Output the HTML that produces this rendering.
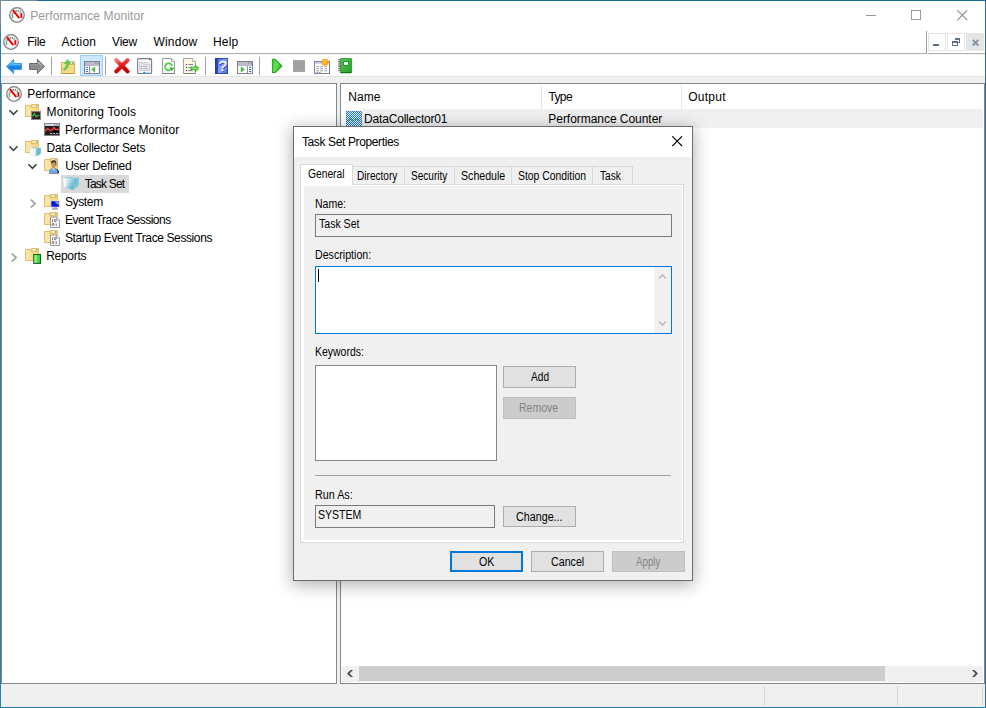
<!DOCTYPE html>
<html lang="en"><head><meta charset="utf-8"><title>Performance Monitor</title>
<style>
html,body{margin:0;padding:0}
body{width:986px;height:708px;overflow:hidden;background:#fff;position:relative;font-family:"Liberation Sans",sans-serif}
#win{position:absolute;left:0;top:0;width:986px;height:708px;overflow:hidden;background:#fff}
.b,.i,.t{position:absolute}
.i{width:16px;height:16px;line-height:0}
svg{display:block}
.t{white-space:pre;line-height:20px;height:20px;color:#000}
.f12{font-size:12px}
.f11{font-size:11px}
.sx{transform-origin:0 0}
#dlg{position:absolute;left:293px;top:126px;width:398px;height:453px;border:1px solid #6b6b6b;background:#f0f0f0;box-shadow:0 3px 16px 1px rgba(0,0,0,.31)}
.btn{position:absolute;box-sizing:border-box;border:1px solid #adadad;background:#e1e1e1}
.btn.dis{border-color:#bfbfbf;background:#ccc}
.btn.def{border:2px solid #0078d7}
</style></head><body><div id="win">

<div class="b" style="left:0px;top:0px;width:986px;height:1px;background:linear-gradient(to right,#6d8ea3 0,#6d8ea3 36px,#166a9d 38px);z-index:50"></div>
<div class="b" style="left:0px;top:0px;width:1px;height:708px;background:linear-gradient(to bottom,#7a8d9b 0,#7a8d9b 20px,#2680aa 40px,#2680aa 600px,#1f86ac 700px);z-index:50"></div>
<div class="b" style="left:985px;top:0px;width:1px;height:708px;background:#2070a8;z-index:50"></div>
<div class="b" style="left:0px;top:707px;width:986px;height:1px;background:#1a7aa2;z-index:50"></div>
<div class="i" style="left:9px;top:7px"><svg width="16" height="16" viewBox="0 0 16 16">
<circle cx="8" cy="8" r="7.2" fill="#fdfcfb" stroke="#85858c" stroke-width="1.5"/>
<circle cx="8" cy="8" r="6" fill="none" stroke="#f3e9e4" stroke-width="0.9"/>
<path d="M3.9 10.6 A4.4 4.4 0 0 1 12.2 6.3" fill="none" stroke="#4f8a6e" stroke-width="1.6" stroke-dasharray="1.3 0.7"/>
<path d="M4.5 3.8 L9.7 10.4" stroke="#f50000" stroke-width="2" stroke-linecap="round"/>
<path d="M11.3 6.3 h2 v4.4 h-2.6 l0.9 -1.2 z" fill="#d80000"/>
</svg></div>
<div class="b" style="left:866px;top:15px;width:10px;height:1px;background:#999"></div>
<div class="b" style="left:911px;top:10px;width:10px;height:10px;box-sizing:border-box;border:1px solid #999"></div>
<div class="i" style="left:957px;top:10px"><svg width="11" height="11" viewBox="0 0 11 11"><path d="M0.3 0.3 L10.2 10.2 M10.2 0.3 L0.3 10.2" stroke="#8c8c8c" stroke-width="1.1" fill="none"/></svg></div>
<div class="i" style="left:3px;top:34px"><svg width="16" height="16" viewBox="0 0 16 16">
<circle cx="8" cy="8" r="7.2" fill="#fdfcfb" stroke="#85858c" stroke-width="1.5"/>
<circle cx="8" cy="8" r="6" fill="none" stroke="#f3e9e4" stroke-width="0.9"/>
<path d="M3.9 10.6 A4.4 4.4 0 0 1 12.2 6.3" fill="none" stroke="#4f8a6e" stroke-width="1.6" stroke-dasharray="1.3 0.7"/>
<path d="M4.5 3.8 L9.7 10.4" stroke="#f50000" stroke-width="2" stroke-linecap="round"/>
<path d="M11.3 6.3 h2 v4.4 h-2.6 l0.9 -1.2 z" fill="#d80000"/>
</svg></div>
<div class="b" style="left:1px;top:53px;width:926px;height:1px;background:#b0b0b0"></div>
<div class="b" style="left:1px;top:54px;width:984px;height:1px;background:#f5f7fb"></div>
<div class="b" style="left:926px;top:31px;width:1px;height:23px;background:#a0a0a0"></div>
<div class="b" style="left:928px;top:53px;width:57px;height:1px;background:#b0b0b0"></div>
<div class="b" style="left:928px;top:33px;width:18px;height:18px;box-sizing:border-box;border:1px solid #e5e5e5;background:#fff"></div>
<div class="b" style="left:947px;top:33px;width:18px;height:18px;box-sizing:border-box;border:1px solid #e5e5e5;background:#fff"></div>
<div class="b" style="left:966px;top:33px;width:18px;height:18px;background:#e5e5e5"></div>
<div class="b" style="left:933px;top:44px;width:6px;height:2px;background:#5f6f88"></div>
<div class="i" style="left:952px;top:38px"><svg width="8" height="8" viewBox="0 0 8 8"><path d="M3 0 h5 v5 h-2 v-1 h1 v-2 h-4z" fill="#5f6f88"/><path d="M0 3 h6 v5 h-6z M1 5 v2 h4 v-2z" fill="#5f6f88" fill-rule="evenodd"/></svg></div>
<div class="i" style="left:971px;top:38px"><svg width="9" height="9" viewBox="0 0 9 9"><path d="M1.8 1.9 L7.4 7.5 M7.4 1.9 L1.8 7.5" stroke="#8492a6" stroke-width="2" fill="none"/></svg></div>
<div class="b" style="left:1px;top:76px;width:984px;height:7px;background:#f0f0f0"></div>
<div class="b" style="left:1px;top:76px;width:984px;height:1px;background:#e3e3e3"></div>
<div class="b" style="left:80px;top:55px;width:23px;height:21px;box-sizing:border-box;border:1px solid #99d1ff;background:#cce8ff"></div>
<div class="b" style="left:51px;top:57px;width:1px;height:18px;background:#a0a0a0"></div>
<div class="b" style="left:105px;top:57px;width:1px;height:18px;background:#a0a0a0"></div>
<div class="b" style="left:205px;top:57px;width:1px;height:18px;background:#a0a0a0"></div>
<div class="b" style="left:259px;top:57px;width:1px;height:18px;background:#a0a0a0"></div>
<div class="i" style="left:6px;top:58px"><svg width="16" height="16" viewBox="0 0 16 16">
<defs><linearGradient id="gb" x1="0" y1="0" x2="0" y2="1"><stop offset="0" stop-color="#62c0fa"/><stop offset="0.35" stop-color="#3aa8f6"/><stop offset="0.6" stop-color="#1478d8"/><stop offset="1" stop-color="#4cb2f4"/></linearGradient></defs>
<path d="M0.5 8.4 L7.6 1.4 V5.5 H15.5 V11.4 H7.6 V15.4 Z" fill="url(#gb)" stroke="#3c9ae8" stroke-width="1" stroke-linejoin="round"/>
<path d="M2.2 8.4 L6.6 4 V6.5 H14.4" fill="none" stroke="#7fd0ff" stroke-width="0.8" opacity="0.8"/>
</svg></div>
<div class="i" style="left:29px;top:58px"><svg width="16" height="16" viewBox="0 0 16 16">
<defs><linearGradient id="gf" x1="0" y1="0" x2="0" y2="1"><stop offset="0" stop-color="#b0b0b0"/><stop offset="0.5" stop-color="#8a8a8a"/><stop offset="1" stop-color="#a8a8a8"/></linearGradient></defs>
<path d="M15.5 8.4 L8.4 1.4 V5.5 H0.6 V11.4 H8.4 V15.4 Z" fill="url(#gf)" stroke="#666" stroke-width="1" stroke-linejoin="round"/>
<path d="M13.6 8.4 L9.4 4.2" fill="none" stroke="#d8d8d8" stroke-width="0.8" opacity="0.8"/>
</svg></div>
<div class="i" style="left:60px;top:58px"><svg width="16" height="16" viewBox="0 0 16 16">
<path d="M9.5 3.8 h5 v3 h-5z" fill="#f7dc8c" stroke="#d8b050"/>
<path d="M11 4.5 h2.6 v1.2 h-2.6z" fill="#fff"/><path d="M12 4.5 h1.6 v1.2 h-1.6z" fill="#3a8ae8"/>
<path d="M1.5 4.5 h7.5 v2 h5.5 v9 h-13 z" fill="#fbe3a0" stroke="#d8b050"/>
<path d="M2 8 h12 v7 h-12z" fill="#f8d884"/>
<path d="M1.5 15.5 h13" stroke="#c09a40"/>
<path d="M3.2 11.2 q3 -1.4 3.4 -5.8 l-2 0.4 l2.8 -4.6 l3.2 4 l-1.9 0.2 q0 5 -4.4 7 z" fill="#56d64e" stroke="#34a830" stroke-width="0.4"/>
</svg></div>
<div class="i" style="left:84px;top:58px"><svg width="16" height="16" viewBox="0 0 16 16">
<rect x="0.5" y="3.5" width="15" height="12" fill="#8d909c" stroke="#80838f"/>
<path d="M1.2 5 h9.6 M11.6 5 h1 M13.4 5 h1" stroke="#eceef6" stroke-width="1.1"/>
<path d="M1.2 7 h13.6" stroke="#e0e2ec" stroke-width="1.1"/>
<rect x="1" y="8" width="4" height="7" fill="#fff"/><rect x="6" y="8" width="9" height="7" fill="#f4f4f4"/><rect x="6.4" y="8.3" width="6.6" height="6.4" fill="#fff"/><g fill="#3a7ad0"><rect x="1.8" y="8.8" width="2.2" height="1.1"/><rect x="1.8" y="10.9" width="2.2" height="1.1"/><rect x="1.8" y="13" width="2.2" height="1.1"/></g><path d="M10.8 9 v5 l-3.2 -2.5z" fill="#3fc03a" stroke="#2aa028" stroke-width="0.5"/>
</svg></div>
<div class="i" style="left:114px;top:58px"><svg width="16" height="16" viewBox="0 0 16 16">
<defs><linearGradient id="gd" x1="0" y1="0" x2="0.3" y2="1"><stop offset="0" stop-color="#f47a7a"/><stop offset="0.45" stop-color="#f02020"/><stop offset="1" stop-color="#c80000"/></linearGradient></defs>
<path d="M2.3 2.1 L13.5 13.3 M13.5 2.1 L2.3 13.3" stroke="#b0b0b0" stroke-width="4.4" stroke-linecap="round" opacity="0.35" transform="translate(0.3,0.5)"/>
<path d="M2.3 2.1 L13.5 13.3 M13.5 2.1 L2.3 13.3" stroke="url(#gd)" stroke-width="4" stroke-linecap="round"/>
</svg></div>
<div class="i" style="left:137px;top:58px"><svg width="16" height="16" viewBox="0 0 16 16">
<rect x="0.6" y="0.6" width="14" height="15" rx="1.3" fill="#fdfdfd" stroke="#7c7c84" stroke-width="1.1"/>
<path d="M1.6 1.7 h11" stroke="#d8dae4" stroke-width="0.9"/>
<rect x="12.2" y="1" width="1.4" height="1.2" fill="#3a5aa8"/>
<path d="M2.8 4.6 h3 v1.6 h7 v6 h-10z" fill="#f6f6fa" stroke="#b4b7c8" stroke-width="0.9"/>
<path d="M6.8 4.7 h1.8 M9.6 4.7 h1.8" stroke="#b4b7c8" stroke-width="0.9"/>
<path d="M6 8.3 h5 M6 10.3 h5" stroke="#a0a0a8" stroke-width="0.9"/>
<rect x="4" y="7.8" width="1.1" height="1.1" fill="#1aa8f0"/><rect x="4" y="9.8" width="1.1" height="1.1" fill="#909098"/>
<rect x="6" y="13.8" width="3" height="1.3" fill="#1ab8f8"/><rect x="10.2" y="13.8" width="2.6" height="1.3" fill="#c8c8cc"/>
</svg></div>
<div class="i" style="left:160px;top:58px"><svg width="16" height="16" viewBox="0 0 16 16">
<path d="M2.5 0.5 h9 l3 3 v12 h-12z" fill="#fefefe" stroke="#9c9c9c"/>
<path d="M2.5 15.5 h12" stroke="#808080"/>
<path d="M11.5 0.5 v3 h3" fill="#f4f4f4" stroke="#9c9c9c" stroke-width="0.8"/>
<path d="M12.1 8.2 A3.5 3.5 0 1 0 10.4 11.7" fill="none" stroke="#4cd046" stroke-width="1.9"/>
<path d="M9.6 9.3 l4.8 0.6 l-3.2 3 z" fill="#22b020"/>
</svg></div>
<div class="i" style="left:183px;top:58px"><svg width="16" height="16" viewBox="0 0 16 16">
<path d="M0.5 0.5 h9 l3 3 v12 h-12z" fill="#fdf7e0" stroke="#a4a49c"/>
<path d="M0.5 15.5 h12" stroke="#808078"/>
<path d="M9.5 0.5 v3 h3" fill="#fff" stroke="#a4a49c" stroke-width="0.8"/>
<g fill="#303038"><circle cx="3.5" cy="6.6" r="0.7"/><circle cx="3.5" cy="9.6" r="0.7"/><circle cx="3.5" cy="12.6" r="0.7"/></g>
<path d="M5.4 6.6 h4.6 M5.4 9.6 h3 M5.4 12.6 h4" stroke="#7c7ab8" stroke-width="1"/>
<path d="M7.9 8.9 h4.2 v-2.3 l4 3.8 l-4 3.8 v-2.3 h-4.2z" fill="#58cc3a" stroke="#36a028" stroke-width="0.5"/>
<path d="M9 10.3 h4.6" stroke="#a8f090" stroke-width="0.9"/>
</svg></div>
<div class="i" style="left:214px;top:58px"><svg width="16" height="16" viewBox="0 0 16 16">
<defs><linearGradient id="gh" x1="0" y1="0" x2="1" y2="1"><stop offset="0" stop-color="#5876e0"/><stop offset="0.5" stop-color="#8aa4f2"/><stop offset="1" stop-color="#4a68d8"/></linearGradient></defs>
<rect x="1" y="0" width="13" height="16" fill="#24369c"/>
<rect x="4" y="0.8" width="9.4" height="14.4" fill="url(#gh)"/>
<rect x="1.6" y="0.8" width="2.4" height="14.4" fill="#2a44c0"/>
<text x="9.2" y="13.5" font-family="Liberation Sans, sans-serif" font-size="15" fill="#1a2c98" text-anchor="middle">?</text>
<text x="8.6" y="13.1" font-family="Liberation Sans, sans-serif" font-size="15" fill="#fff" stroke="#fff" stroke-width="0.3" text-anchor="middle">?</text>
</svg></div>
<div class="i" style="left:237px;top:58px"><svg width="16" height="16" viewBox="0 0 16 16">
<rect x="0.5" y="3.5" width="15" height="12" fill="#8d909c" stroke="#80838f"/>
<path d="M1.2 5 h9.6 M11.6 5 h1 M13.4 5 h1" stroke="#eceef6" stroke-width="1.1"/>
<path d="M1.2 7 h13.6" stroke="#e0e2ec" stroke-width="1.1"/>
<rect x="11" y="8" width="4" height="7" fill="#fff"/><rect x="1" y="8" width="9" height="7" fill="#f4f4f4"/><rect x="1.4" y="8.3" width="8.4" height="6.4" fill="#fff"/><g fill="#3a7ad0"><rect x="12" y="8.8" width="2.2" height="1.1"/><rect x="12" y="10.9" width="2.2" height="1.1"/><rect x="12" y="13" width="2.2" height="1.1"/></g><path d="M4.2 9 v5 l3.2 -2.5z" fill="#3fc03a" stroke="#2aa028" stroke-width="0.5"/>
</svg></div>
<div class="i" style="left:269px;top:58px"><svg width="16" height="16" viewBox="0 0 16 16">
<defs><linearGradient id="gp" x1="0" y1="0" x2="1" y2="0.6"><stop offset="0" stop-color="#42cc3a"/><stop offset="0.5" stop-color="#66e058"/><stop offset="1" stop-color="#30b828"/></linearGradient></defs>
<path d="M3.5 1.4 H6.2 L12.8 8 L6.2 14.5 H3.5 Z" fill="url(#gp)" stroke="#2aa81e" stroke-width="1.1" stroke-linejoin="round"/>
</svg></div>
<div class="i" style="left:291px;top:58px"><svg width="16" height="16" viewBox="0 0 16 16"><rect x="2.3" y="2.3" width="11.4" height="11.4" fill="#a0a0a0" stroke="#979797" stroke-width="0.6"/></svg></div>
<div class="i" style="left:314px;top:58px"><svg width="16" height="16" viewBox="0 0 16 16">
<rect x="0.5" y="3.5" width="15" height="12" fill="#fdfdfd" stroke="#80838f"/>
<rect x="1" y="4" width="14" height="1.8" fill="#c4cce0"/>
<g stroke="#a0a0a8" stroke-width="1"><path d="M2.2 8.6 h2.8 M6.2 8.6 h2.8 M10.4 8.6 h2.8 M2.2 10.7 h2.8 M6.2 10.7 h2.8 M10.4 10.7 h2.8 M2.2 12.8 h2.8 M6.2 12.8 h2.8 M10.4 12.8 h2.8"/></g>
<path d="M2.4 14.6 h1.6 M5 14.6 h1.6" stroke="#5a8ac8" stroke-width="0.9"/>
<g fill="#ff9a0c">
<path d="M10.9 -0.2 l1.1 2.6 h-2.2z M10.9 8.8 l1.1 -2.6 h-2.2z M6.4 4.3 l2.6 -1.1 v2.2z M15.4 4.3 l-2.6 -1.1 v2.2z M7.7 1.1 l2.6 1.1 l-1.5 1.5z M14.1 1.1 l-2.6 1.1 l1.5 1.5z M7.7 7.5 l2.6 -1.1 l-1.5 -1.5z M14.1 7.5 l-2.6 -1.1 l1.5 -1.5z"/>
<circle cx="10.9" cy="4.3" r="3"/></g>
<circle cx="10.7" cy="4.1" r="1.9" fill="#ffc830"/>
</svg></div>
<div class="i" style="left:337px;top:58px"><svg width="16" height="16" viewBox="0 0 16 16">
<defs><linearGradient id="gk" x1="0" y1="0" x2="1" y2="1"><stop offset="0" stop-color="#58cc50"/><stop offset="0.5" stop-color="#3eb43a"/><stop offset="1" stop-color="#2a9c2a"/></linearGradient></defs>
<rect x="3.2" y="0.4" width="11.4" height="14.4" rx="0.8" fill="url(#gk)" stroke="#1c8a22" stroke-width="0.8"/>
<path d="M3.4 14.6 h11" stroke="#0f6a16" stroke-width="0.9"/>
<rect x="6.4" y="3.6" width="5.2" height="3.8" fill="#f4f6fa" stroke="#1c8a22" stroke-width="0.9"/>
<g stroke="#6c6c74" stroke-width="1.1" fill="none" stroke-linecap="round"><path d="M1.4 1.8 h2.4 M1.4 3.9 h2.4 M1.4 6 h2.4 M1.4 8.1 h2.4 M1.4 10.2 h2.4 M1.4 12.3 h2.4"/></g>
</svg></div>
<div class="b" style="left:1px;top:83px;width:336px;height:601px;box-sizing:border-box;border:1px solid #828790;background:#fff"></div>
<div class="b" style="left:337px;top:83px;width:3px;height:601px;background:#f0f0f0"></div>
<div class="b" style="left:340px;top:83px;width:645px;height:601px;box-sizing:border-box;border:1px solid #828790;background:#fff"></div>
<div class="b" style="left:61px;top:175px;width:68px;height:18px;background:#d9d9d9"></div>
<div class="i" style="left:6px;top:86px"><svg width="16" height="16" viewBox="0 0 16 16">
<circle cx="8" cy="8" r="7.2" fill="#fdfcfb" stroke="#85858c" stroke-width="1.5"/>
<circle cx="8" cy="8" r="6" fill="none" stroke="#f3e9e4" stroke-width="0.9"/>
<path d="M3.9 10.6 A4.4 4.4 0 0 1 12.2 6.3" fill="none" stroke="#4f8a6e" stroke-width="1.6" stroke-dasharray="1.3 0.7"/>
<path d="M4.5 3.8 L9.7 10.4" stroke="#f50000" stroke-width="2" stroke-linecap="round"/>
<path d="M11.3 6.3 h2 v4.4 h-2.6 l0.9 -1.2 z" fill="#d80000"/>
</svg></div>
<div class="i" style="left:25px;top:104px"><svg width="16" height="16" viewBox="0 0 16 16">
<path d="M6.5 0.5 h7 v3 h-7 z" fill="#f7dc8c" stroke="#e2bf66"/>
<path d="M8.6 1.4 h3.6 v1.1 h-3.6z" fill="#fff"/>
<path d="M10.8 1.4 h1.6 v1.1 h-1.6z" fill="#3a8ae8"/>
<path d="M0.5 1.5 h5.6 v2.3 h7.4 v8.7 h-13 z" fill="#fbe5a6" stroke="#e2bf66"/>
<path d="M6.4 4.3 h6.6 v7.7 h-6.6z" fill="#f9d980"/>

<rect x="6.6" y="7.6" width="8.9" height="7.9" fill="#2b1f1f" stroke="#85858c" stroke-width="1.1"/>
<path d="M7.6 12.4 l1.8 -2.8 l1.7 3 l1.4 -0.9 l1.8 -0.5" fill="none" stroke="#3fd04a" stroke-width="1.1"/>
</svg></div>
<div class="i" style="left:44px;top:122px"><svg width="16" height="16" viewBox="0 0 16 16">
<rect x="0.5" y="1.5" width="15" height="12" fill="#241a1a" stroke="#85858c"/>
<rect x="1" y="2" width="14" height="2" fill="#d6d9e6"/>
<path d="M10 3 h4.6" stroke="#3a5aa8" stroke-width="1.2" stroke-dasharray="1 0.7"/>
<path d="M1.2 9.3 l2.4 -3 l2.4 2.2 l2.2 -0.6 l1.6 -2.6 l1.8 2.2 h3.6" fill="none" stroke="#e84040" stroke-width="1.5" stroke-linejoin="round"/>
<path d="M9.6 8.8 h5.2 v1.6 h-5.2z" fill="#000"/>
<path d="M6 11.6 h8.2" stroke="#d0d0d0" stroke-width="1" stroke-dasharray="2 1.1"/>
</svg></div>
<div class="i" style="left:25px;top:140px"><svg width="16" height="16" viewBox="0 0 16 16">
<path d="M6.5 0.5 h7 v3 h-7 z" fill="#f7dc8c" stroke="#e2bf66"/>
<path d="M8.6 1.4 h3.6 v1.1 h-3.6z" fill="#fff"/>
<path d="M10.8 1.4 h1.6 v1.1 h-1.6z" fill="#3a8ae8"/>
<path d="M0.5 1.5 h5.6 v2.3 h7.4 v8.7 h-13 z" fill="#fbe5a6" stroke="#e2bf66"/>
<path d="M6.4 4.3 h6.6 v7.7 h-6.6z" fill="#f9d980"/>

<path d="M5 8 l6.2 0.5 l-0.2 8 l-5.8 -1.4 z" fill="#e6f4fa"/>
<path d="M5.6 9 l4.2 0.4 l-0.2 5.2 l-3.8 -0.9 z" fill="#f8fcfe"/>
<path d="M11.2 8.5 l4.8 -0.8 l-0.3 6.3 l-4.7 2.5 z" fill="#6db9d6"/>
<path d="M5 8 l4.5 -0.9 l6.5 0.6 l-4.8 0.8 z" fill="#a5d8ec"/>
<path d="M11.2 8.5 l-0.2 8" stroke="#9fd2e6" stroke-width="0.6"/>
</svg></div>
<div class="i" style="left:44px;top:158px"><svg width="16" height="16" viewBox="0 0 16 16">
<path d="M6.5 0.5 h7 v3 h-7 z" fill="#f7dc8c" stroke="#e2bf66"/>
<path d="M8.6 1.4 h3.6 v1.1 h-3.6z" fill="#fff"/>
<path d="M10.8 1.4 h1.6 v1.1 h-1.6z" fill="#3a8ae8"/>
<path d="M0.5 1.5 h5.6 v2.3 h7.4 v8.7 h-13 z" fill="#fbe5a6" stroke="#e2bf66"/>
<path d="M6.4 4.3 h6.6 v7.7 h-6.6z" fill="#f9d980"/>

<path d="M5.2 15.6 q-0.3 -4.6 3.6 -5.3 h1.6 q4.2 0.6 4.6 3.8 q0.2 1.5 -1.4 1.5 z" fill="#10141c"/>
<path d="M5 15 q-0.2 -4.3 3.6 -5 h1.2 q3.6 0.5 4 4 q0 1 -1 1 z" fill="#6fa9e4"/>
<path d="M8.2 10 l1.2 2.4 l1.2 -2.4z" fill="#e8eef8"/>
<ellipse cx="9.6" cy="5.8" rx="2.5" ry="3.3" fill="#c9946a"/>
<path d="M7 5.6 q0 -3.3 2.8 -3.3 q2.6 0 2.6 3.6 q0 1.8 -0.6 2.6 q0.2 -3.8 -1.4 -4.6 q-1.6 0.2 -3.4 1.7z" fill="#35302c"/>
<path d="M8.4 8.6 h2.4 v1.8 h-2.4z" fill="#b9855c"/>
</svg></div>
<div class="i" style="left:63px;top:176px"><svg width="16" height="16" viewBox="0 0 16 16">
<defs><linearGradient id="cf" x1="0" y1="0" x2="1" y2="0.6"><stop offset="0" stop-color="#ffffff"/><stop offset="0.45" stop-color="#cfe8f3"/><stop offset="1" stop-color="#5fb2d2"/></linearGradient>
<linearGradient id="cr" x1="0" y1="0" x2="1" y2="1"><stop offset="0" stop-color="#63b6d4"/><stop offset="1" stop-color="#86cfe0"/></linearGradient></defs>
<path d="M0.3 1.9 L10.6 2.7 L10.3 13.9 L0.5 11.2 Z" fill="url(#cf)"/>
<path d="M10.6 2.7 L16 1.7 L15.8 9.6 L10.3 13.9 Z" fill="url(#cr)"/>
<path d="M0.3 1.9 L6 1 L16 1.7 L10.6 2.7 Z" fill="#8ccbe2"/>
<path d="M1.2 3.2 L3.2 3.4 L3.1 10.8 L1.3 10.3 Z" fill="#fff" opacity="0.9"/>
</svg></div>
<div class="i" style="left:44px;top:194px"><svg width="16" height="16" viewBox="0 0 16 16">
<path d="M6.5 0.5 h7 v3 h-7 z" fill="#f7dc8c" stroke="#e2bf66"/>
<path d="M8.6 1.4 h3.6 v1.1 h-3.6z" fill="#fff"/>
<path d="M10.8 1.4 h1.6 v1.1 h-1.6z" fill="#3a8ae8"/>
<path d="M0.5 1.5 h5.6 v2.3 h7.4 v8.7 h-13 z" fill="#fbe5a6" stroke="#e2bf66"/>
<path d="M6.4 4.3 h6.6 v7.7 h-6.6z" fill="#f9d980"/>

<rect x="6.4" y="6.3" width="9.4" height="7.3" fill="#d4d4dc"/>
<rect x="7.3" y="7.2" width="7.6" height="5.5" fill="#1212d6"/>
<path d="M10.6 7.2 h4.3 v3.6 q-2.6 -0.2 -4.3 -3.6z" fill="#7a9af0"/>
<rect x="8" y="14" width="6" height="1.9" fill="#b4b4b8"/>
<rect x="9" y="13.6" width="4" height="0.6" fill="#909098"/>
</svg></div>
<div class="i" style="left:44px;top:212px"><svg width="16" height="16" viewBox="0 0 16 16">
<path d="M6.5 0.5 h7 v3 h-7 z" fill="#f7dc8c" stroke="#e2bf66"/>
<path d="M8.6 1.4 h3.6 v1.1 h-3.6z" fill="#fff"/>
<path d="M10.8 1.4 h1.6 v1.1 h-1.6z" fill="#3a8ae8"/>
<path d="M0.5 1.5 h5.6 v2.3 h7.4 v8.7 h-13 z" fill="#fbe5a6" stroke="#e2bf66"/>
<path d="M6.4 4.3 h6.6 v7.7 h-6.6z" fill="#f9d980"/>

<path d="M6.5 5 h6 l3 3 v7.5 h-9 z" fill="#fdfdfd" stroke="#9a9a9a"/>
<path d="M12.5 5 v3 h3" fill="#f0f0f0" stroke="#9a9a9a" stroke-width="0.8"/>
<g stroke="#606060" stroke-width="0.9" fill="none"><path d="M8.6 7.4 v2.5"/><ellipse cx="11.2" cy="8.6" rx="0.9" ry="1.2"/><ellipse cx="9" cy="12.6" rx="0.9" ry="1.2"/><path d="M12.2 11.4 v2.5"/></g>
</svg></div>
<div class="i" style="left:44px;top:230px"><svg width="16" height="16" viewBox="0 0 16 16">
<path d="M6.5 0.5 h7 v3 h-7 z" fill="#f7dc8c" stroke="#e2bf66"/>
<path d="M8.6 1.4 h3.6 v1.1 h-3.6z" fill="#fff"/>
<path d="M10.8 1.4 h1.6 v1.1 h-1.6z" fill="#3a8ae8"/>
<path d="M0.5 1.5 h5.6 v2.3 h7.4 v8.7 h-13 z" fill="#fbe5a6" stroke="#e2bf66"/>
<path d="M6.4 4.3 h6.6 v7.7 h-6.6z" fill="#f9d980"/>

<path d="M6.5 5 h6 l3 3 v7.5 h-9 z" fill="#fdfdfd" stroke="#9a9a9a"/>
<path d="M12.5 5 v3 h3" fill="#f0f0f0" stroke="#9a9a9a" stroke-width="0.8"/>
<g stroke="#606060" stroke-width="0.9" fill="none"><path d="M8.6 7.4 v2.5"/><ellipse cx="11.2" cy="8.6" rx="0.9" ry="1.2"/><ellipse cx="9" cy="12.6" rx="0.9" ry="1.2"/><path d="M12.2 11.4 v2.5"/></g>
</svg></div>
<div class="i" style="left:25px;top:248px"><svg width="16" height="16" viewBox="0 0 16 16">
<path d="M6.5 0.5 h7 v3 h-7 z" fill="#f7dc8c" stroke="#e2bf66"/>
<path d="M8.6 1.4 h3.6 v1.1 h-3.6z" fill="#fff"/>
<path d="M10.8 1.4 h1.6 v1.1 h-1.6z" fill="#3a8ae8"/>
<path d="M0.5 1.5 h5.6 v2.3 h7.4 v8.7 h-13 z" fill="#fbe5a6" stroke="#e2bf66"/>
<path d="M6.4 4.3 h6.6 v7.7 h-6.6z" fill="#f9d980"/>

<rect x="8.2" y="6" width="7.8" height="9.9" fill="#0b6410"/>
<rect x="9.3" y="7.1" width="5.6" height="7.7" fill="#4fd850"/>
<rect x="9.3" y="7.1" width="2.6" height="7.7" fill="#86ee86"/>
</svg></div>
<div class="b" style="left:8px;top:109px"><svg width="11" height="7" viewBox="0 0 11 7"><path d="M1.4 1.2 L5.5 5.3 L9.6 1.2" fill="none" stroke="#404040" stroke-width="1.6"/></svg></div>
<div class="b" style="left:8px;top:145px"><svg width="11" height="7" viewBox="0 0 11 7"><path d="M1.4 1.2 L5.5 5.3 L9.6 1.2" fill="none" stroke="#404040" stroke-width="1.6"/></svg></div>
<div class="b" style="left:27px;top:163px"><svg width="11" height="7" viewBox="0 0 11 7"><path d="M1.4 1.2 L5.5 5.3 L9.6 1.2" fill="none" stroke="#404040" stroke-width="1.6"/></svg></div>
<div class="b" style="left:30px;top:199px"><svg width="7" height="10" viewBox="0 0 7 10"><path d="M0.8 0.6 L5 4.6 L0.8 8.6" fill="none" stroke="#a6a6a6" stroke-width="1.9"/></svg></div>
<div class="b" style="left:11px;top:253px"><svg width="7" height="10" viewBox="0 0 7 10"><path d="M0.8 0.6 L5 4.6 L0.8 8.6" fill="none" stroke="#a6a6a6" stroke-width="1.9"/></svg></div>
<div class="b" style="left:541px;top:85px;width:1px;height:24px;background:#e5e5e5"></div>
<div class="b" style="left:681px;top:85px;width:1px;height:24px;background:#e5e5e5"></div>
<div class="b" style="left:362px;top:109px;width:621px;height:19px;background:#f0f0f0"></div>
<div class="i" style="left:346px;top:111px"><svg width="16" height="16" viewBox="0 0 16 16">
<defs><pattern id="chk" width="2" height="2" patternUnits="userSpaceOnUse"><rect width="1" height="1" fill="#0878d8"/><rect x="1" y="1" width="1" height="1" fill="#0878d8"/></pattern></defs>
<rect width="16" height="16" fill="#d9c8bc"/>
<rect x="1" y="1" width="14" height="14" fill="#fdfdfd"/>
<path d="M2 10.5 l2.2 -3.4 l2.6 2.4 l2.6 -1 l2.4 -0.4 l2.2 2" fill="none" stroke="#7cc232" stroke-width="1.3"/>
<rect width="16" height="16" fill="url(#chk)" shape-rendering="crispEdges"/>
</svg></div>
<div class="b" style="left:342px;top:666px;width:641px;height:16px;background:#f0f0f0"></div>
<div class="b" style="left:359px;top:666px;width:526px;height:15px;background:#cdcdcd"></div>
<div class="b" style="left:346px;top:669px"><svg width="8" height="9" viewBox="0 0 8 9"><path d="M1 4.5 L4.6 1 H7 L3.6 4.5 L7 8 H4.6 Z" fill="#4d4d4d"/></svg></div>
<div class="b" style="left:971px;top:669px"><svg width="8" height="9" viewBox="0 0 8 9"><path d="M7 4.5 L3.4 1 H1 L4.4 4.5 L1 8 H3.4 Z" fill="#4d4d4d"/></svg></div>
<div class="b" style="left:1px;top:684px;width:984px;height:23px;background:#f0f0f0"></div>
<div class="b" style="left:764px;top:686px;width:1px;height:20px;background:#d7d7d7"></div>
<div class="b" style="left:897px;top:686px;width:1px;height:20px;background:#d7d7d7"></div>
<div class="b" style="left:982px;top:686px;width:1px;height:20px;background:#d7d7d7"></div>
<span class="t f12" style="left:30.2px;top:6px;letter-spacing:0.11px;color:#999;">Performance Monitor</span>
<span class="t f12" style="left:27.2px;top:32px;letter-spacing:-0.25px;">File</span>
<span class="t f12" style="left:61.5px;top:32px;letter-spacing:0.22px;">Action</span>
<span class="t f12" style="left:112.1px;top:32px;letter-spacing:-0.25px;">View</span>
<span class="t f12" style="left:153.4px;top:32px;letter-spacing:0.23px;">Window</span>
<span class="t f12" style="left:213.0px;top:32px;letter-spacing:0.15px;">Help</span>
<span class="t f12" style="left:27.3px;top:84px;letter-spacing:-0.05px;">Performance</span>
<span class="t f12" style="left:46.5px;top:102px;letter-spacing:0.16px;">Monitoring Tools</span>
<span class="t f12" style="left:65.0px;top:120px;letter-spacing:0.12px;">Performance Monitor</span>
<span class="t f12" style="left:46.5px;top:138px;letter-spacing:-0.25px;">Data Collector Sets</span>
<span class="t f12" style="left:65.3px;top:156px;letter-spacing:-0.34px;">User Defined</span>
<span class="t f12" style="left:84.8px;top:174px;letter-spacing:-0.82px;">Task Set</span>
<span class="t f12" style="left:64.9px;top:192px;letter-spacing:-0.35px;">System</span>
<span class="t f12" style="left:65.0px;top:210px;letter-spacing:-0.52px;">Event Trace Sessions</span>
<span class="t f12" style="left:64.9px;top:228px;letter-spacing:-0.39px;">Startup Event Trace Sessions</span>
<span class="t f12" style="left:46.2px;top:246px;letter-spacing:-0.28px;">Reports</span>
<span class="t f12" style="left:348.3px;top:87px;letter-spacing:0.07px;">Name</span>
<span class="t f12" style="left:548.5px;top:87px;letter-spacing:-0.65px;">Type</span>
<span class="t f12" style="left:688.2px;top:87px;letter-spacing:0.26px;">Output</span>
<span class="t f12" style="left:364.1px;top:109px;letter-spacing:-0.19px;">DataCollector01</span>
<span class="t f12" style="left:548.3px;top:109px;letter-spacing:-0.04px;">Performance Counter</span>
<div id="dlg">
<div class="b" style="left:0px;top:0px;width:398px;height:30px;background:#fff"></div>
<div class="b" style="left:378px;top:9px;line-height:0"><svg width="11" height="11" viewBox="0 0 11 11"><path d="M0.3 0.3 L10 10 M10 0.3 L0.3 10" stroke="#000" stroke-width="1.1" fill="none"/></svg></div>
<div class="b" style="left:6px;top:57px;width:384px;height:359px;box-sizing:border-box;border:1px solid #d9d9d9;background:#fff"></div>
<div class="b" style="left:10px;top:59px;width:378px;height:354px;background:#f0f0f0"></div>
<div class="b" style="left:58px;top:39px;width:281px;height:18px;box-sizing:border-box;border-top:1px solid #d9d9d9;background:#f0f0f0"></div>
<div class="b" style="left:110px;top:39px;width:1px;height:18px;background:#d9d9d9"></div>
<div class="b" style="left:160px;top:39px;width:1px;height:18px;background:#d9d9d9"></div>
<div class="b" style="left:217px;top:39px;width:1px;height:18px;background:#d9d9d9"></div>
<div class="b" style="left:298px;top:39px;width:1px;height:18px;background:#d9d9d9"></div>
<div class="b" style="left:338px;top:39px;width:1px;height:18px;background:#d9d9d9"></div>
<div class="b" style="left:6px;top:37px;width:53px;height:21px;box-sizing:border-box;border:1px solid #d9d9d9;border-bottom:none;background:#fff"></div>
<div class="b" style="left:21px;top:87px;width:357px;height:23px;box-sizing:border-box;border:1px solid #7a7a7a;background:#f0f0f0"></div>
<div class="b" style="left:21px;top:139px;width:357px;height:68px;box-sizing:border-box;border:1px solid #0078d7;background:#fff"></div>
<div class="b" style="left:360px;top:140px;width:17px;height:66px;background:#f0f0f0"></div>
<div class="b" style="left:364px;top:146px;line-height:0"><svg width="9" height="7" viewBox="0 0 9 7"><path d="M1 5.5 L4.5 2 L8 5.5" fill="none" stroke="#bfbfbf" stroke-width="1.6"/></svg></div>
<div class="b" style="left:364px;top:193px;line-height:0"><svg width="9" height="7" viewBox="0 0 9 7"><path d="M1 1.5 L4.5 5 L8 1.5" fill="none" stroke="#bfbfbf" stroke-width="1.6"/></svg></div>
<div class="b" style="left:24px;top:142px;width:1px;height:13px;background:#000"></div>
<div class="b" style="left:21px;top:238px;width:182px;height:96px;box-sizing:border-box;border:1px solid #828790;background:#fff"></div>
<div class="btn" style="left:209px;top:239px;width:73px;height:22px;"></div>
<div class="btn dis" style="left:209px;top:270px;width:73px;height:22px;"></div>
<div class="b" style="left:21px;top:348px;width:356px;height:1px;background:#a0a0a0"></div>
<div class="b" style="left:21px;top:378px;width:180px;height:23px;box-sizing:border-box;border:1px solid #7a7a7a;background:#f0f0f0"></div>
<div class="btn" style="left:209px;top:379px;width:73px;height:21px;"></div>
<div class="btn def" style="left:156px;top:424px;width:73px;height:21px;"></div>
<div class="btn" style="left:237px;top:424px;width:73px;height:21px;"></div>
<div class="btn dis" style="left:318px;top:424px;width:73px;height:21px;"></div>
<span class="t f12" style="left:7.9px;top:5px;letter-spacing:-0.37px;">Task Set Properties</span>
<span class="t f12 sx" style="left:13.9px;top:37px;transform:scaleX(0.855);">General</span>
<span class="t f12 sx" style="left:63.3px;top:39px;transform:scaleX(0.840);">Directory</span>
<span class="t f12 sx" style="left:117.0px;top:39px;transform:scaleX(0.840);">Security</span>
<span class="t f12 sx" style="left:167.2px;top:39px;transform:scaleX(0.884);">Schedule</span>
<span class="t f12 sx" style="left:224.4px;top:39px;transform:scaleX(0.865);">Stop Condition</span>
<span class="t f12 sx" style="left:306.1px;top:39px;transform:scaleX(0.841);">Task</span>
<span class="t f12 sx" style="left:20.7px;top:67px;transform:scaleX(0.878);">Name:</span>
<span class="t f12 sx" style="left:25.0px;top:87px;transform:scaleX(0.879);">Task Set</span>
<span class="t f12 sx" style="left:20.7px;top:118px;transform:scaleX(0.887);">Description:</span>
<span class="t f12 sx" style="left:20.7px;top:215px;transform:scaleX(0.872);">Keywords:</span>
<span class="t f12 sx" style="left:236.7px;top:240px;transform:scaleX(0.844);">Add</span>
<span class="t f12 sx" style="left:225.0px;top:271px;transform:scaleX(0.874);color:#838383;">Remove</span>
<span class="t f12 sx" style="left:21.1px;top:358px;transform:scaleX(0.897);">Run As:</span>
<span class="t f12 sx" style="left:24.3px;top:378px;transform:scaleX(0.877);">SYSTEM</span>
<span class="t f12 sx" style="left:221.7px;top:380px;transform:scaleX(0.895);">Change...</span>
<span class="t f12 sx" style="left:184.8px;top:425px;transform:scaleX(0.885);">OK</span>
<span class="t f12 sx" style="left:256.8px;top:425px;transform:scaleX(0.889);">Cancel</span>
<span class="t f12 sx" style="left:341.7px;top:425px;transform:scaleX(0.810);color:#838383;">Apply</span>
</div>
</div></body></html>
